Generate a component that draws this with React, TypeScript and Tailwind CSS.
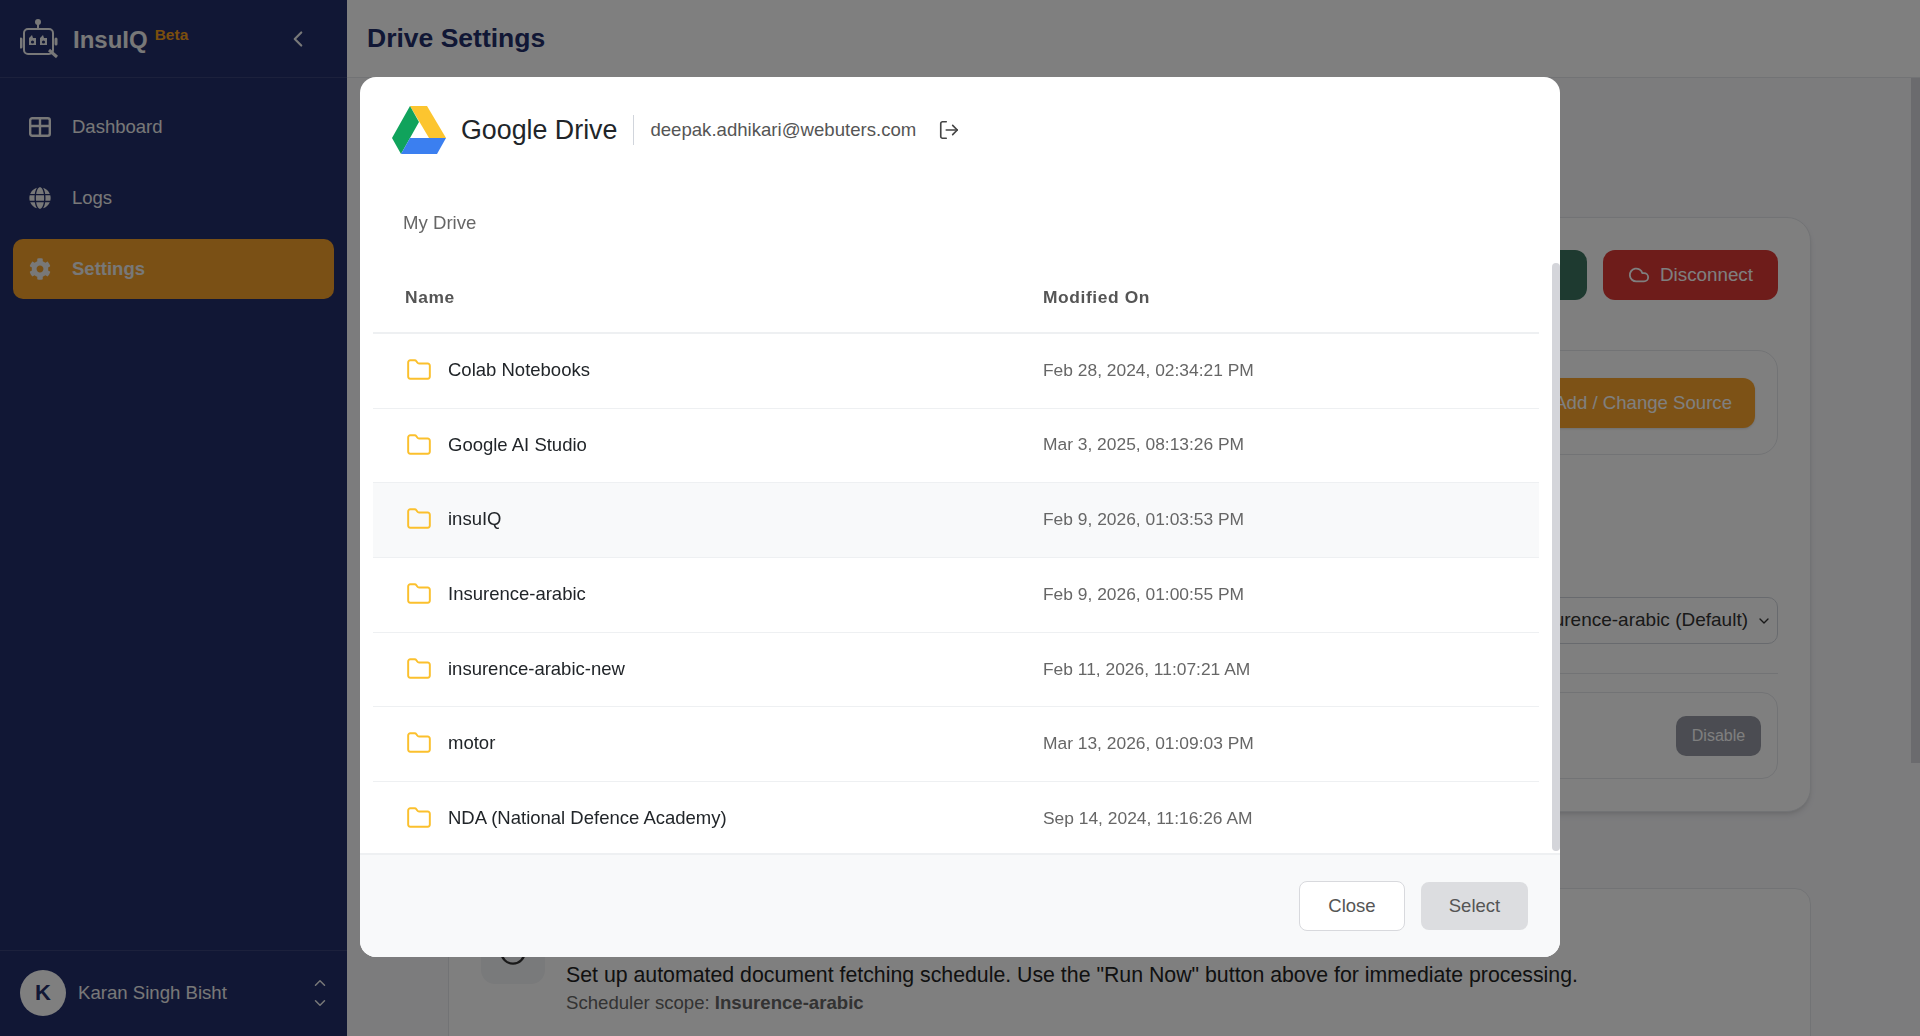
import { ChevronDown, ChevronLeft, ChevronUp, Cloud, Clock, Folder, LogOut } from "lucide-react";
import { FaCog, FaGlobe } from "react-icons/fa";

const files = [
  { name: "Colab Notebooks", modified: "Feb 28, 2024, 02:34:21 PM" },
  { name: "Google AI Studio", modified: "Mar 3, 2025, 08:13:26 PM" },
  { name: "insuIQ", modified: "Feb 9, 2026, 01:03:53 PM", hover: true },
  { name: "Insurence-arabic", modified: "Feb 9, 2026, 01:00:55 PM" },
  { name: "insurence-arabic-new", modified: "Feb 11, 2026, 11:07:21 AM" },
  { name: "motor", modified: "Mar 13, 2026, 01:09:03 PM" },
  { name: "NDA (National Defence Academy)", modified: "Sep 14, 2024, 11:16:26 AM" },
];

const RobotLogo = () => (
  <svg width="40" height="42" viewBox="0 0 40 42" fill="none" stroke="currentColor" strokeWidth="2">
    <circle cx="18" cy="4" r="3" fill="currentColor" stroke="none" />
    <path d="M18 6v5" />
    <rect x="4" y="11" width="29" height="25" rx="4" />
    <path d="M1 21v8M36 21v5" strokeWidth="3" strokeLinecap="round" />
    <path d="M9 20l3-3 1 3h3v7H9z" fill="currentColor" stroke="none" />
    <path d="M20 20l3-3 1 3h3v7h-7z" fill="currentColor" stroke="none" />
    <circle cx="12.5" cy="24" r="1.6" fill="#222e6a" stroke="none" />
    <circle cx="23.5" cy="24" r="1.6" fill="#222e6a" stroke="none" />
    <path d="M29 32l8 7" strokeWidth="3" />
  </svg>
);

const DashboardIcon = () => (
  <svg width="22" height="20" viewBox="0 0 22 20" fill="none" stroke="currentColor" strokeWidth="2.4">
    <rect x="1.2" y="1.2" width="19.6" height="17.6" rx="2" />
    <path d="M1 9h20M11 1v18" />
  </svg>
);

const DriveLogo = () => (
  <svg width="54" height="48" viewBox="0 0 54 48">
    <path d="M18 0h17L54 32H37z" fill="#fcc52f" />
    <path d="M18 0L0 32l9 16 18-32z" fill="#10a35c" />
    <path d="M18 32h36l-9 16H9z" fill="#3b7ff0" />
  </svg>
);

const Sidebar = () => (
  <aside className="w-[347px] h-full shrink-0 bg-[#222e6a] flex flex-col text-[#f0f0f0]">
    <div className="h-[78px] shrink-0 border-b border-white/10 flex items-center pl-[20px] pr-[36px]">
      <RobotLogo />
      <span className="ml-[13px] mt-[3px] text-[24px] font-bold">InsuIQ</span>
      <span className="ml-[7px] mb-[8px] text-[15.5px] font-bold text-[#f59e1b]">Beta</span>
      <ChevronLeft className="ml-auto" size={26} strokeWidth={2} />
    </div>
    <nav className="flex-1 px-[13px] pt-[19px] flex flex-col gap-[11px] text-[18.5px]">
      <a className="h-[60px] flex items-center gap-[21px] pl-[16px]">
        <DashboardIcon />
        <span>Dashboard</span>
      </a>
      <a className="h-[60px] flex items-center gap-[21px] pl-[16px]">
        <FaGlobe size={22} />
        <span>Logs</span>
      </a>
      <a className="h-[60px] flex items-center gap-[21px] pl-[16px] rounded-[10px] bg-[#f4a02a] font-bold">
        <FaCog size={22} />
        <span>Settings</span>
      </a>
    </nav>
    <div className="h-[86px] pb-[2px] shrink-0 border-t border-white/10 flex items-center pl-[20px] pr-[18px]">
      <div className="w-[46px] h-[46px] rounded-full bg-white text-[#222e6a] font-bold text-[22px] flex items-center justify-center">
        K
      </div>
      <span className="ml-[12px] text-[18.6px]">Karan Singh Bisht</span>
      <div className="ml-auto flex flex-col items-center gap-[2px]">
        <ChevronUp size={18} />
        <ChevronDown size={18} />
      </div>
    </div>
  </aside>
);

const Background = () => (
  <main className="flex-1 h-full flex flex-col overflow-hidden bg-[#f8f8fb]">
    <header className="h-[78px] shrink-0 bg-white border-b border-gray-200 flex items-center pl-[20px]">
      <h1 className="text-[26.5px] font-bold text-[#222e6a]">Drive Settings</h1>
    </header>
    <div className="flex-1 pl-[101px] pr-[109px] pt-[139px] flex flex-col">
      <section className="h-[595px] shrink-0 bg-white rounded-[24px] border border-gray-200 shadow-md pt-[32px] px-[32px] flex flex-col items-end">
        <div className="flex gap-[16px]">
          <button className="w-[160px] h-[50px] rounded-[12px] bg-[#3c7460]"></button>
          <button className="w-[175px] h-[50px] rounded-[12px] bg-[#dc3835] text-white text-[18.8px] flex items-center justify-center gap-[10px]">
            <Cloud size={22} />
            Disconnect
          </button>
        </div>
        <div className="w-full h-[105px] mt-[50px] rounded-[20px] border border-gray-200 flex items-center justify-end pr-[22px]">
          <button className="w-[300px] h-[50px] rounded-[12px] bg-[#fba42c] text-white text-[18.6px] pr-[23px] text-right shadow">
            Add / Change Source
          </button>
        </div>
        <div className="w-[400px] h-[47px] mt-[142px] rounded-[10px] border border-gray-300 flex items-center justify-end pr-[5px] gap-[8px] text-[19px] text-[#333]">
          Insurence-arabic (Default)
          <ChevronDown size={16} />
        </div>
        <div className="w-full h-px mt-[29px] bg-gray-200"></div>
        <div className="w-full h-[87px] mt-[18px] rounded-[16px] border border-gray-200 flex items-center justify-end pr-[16px]">
          <button className="w-[85px] h-[40px] rounded-[10px] bg-[#9699a4] text-white text-[16px]">Disable</button>
        </div>
      </section>
      <section className="h-[300px] shrink-0 mt-[76px] bg-white rounded-t-[16px] border border-gray-200 pl-[32px] pt-[31px] flex gap-[21px]">
        <div className="w-[64px] h-[64px] rounded-[14px] bg-gray-100 flex items-center justify-center text-[#333]">
          <Clock size={28} />
        </div>
        <div className="pt-[41px]">
          <p className="text-[21.3px] leading-[28px] whitespace-nowrap text-[#222]">
            Set up automated document fetching schedule. Use the "Run Now" button above for immediate processing.
          </p>
          <p className="text-[18.6px] leading-[28px] text-[#666]">
            Scheduler scope: <b>Insurence-arabic</b>
          </p>
        </div>
      </section>
    </div>
  </main>
);

const FileRow = ({ name, modified, hover }: { name: string; modified: string; hover?: boolean }) => (
  <div className={`h-[74.7px] pb-[2px] shrink-0 flex items-center border-b border-[#eef0f2] ${hover ? "bg-[#f8f9fa]" : ""}`}>
    <div className="w-[670px] pl-[33px] flex items-center gap-[16px] text-[18.5px] text-[#212529]">
      <Folder size={26} strokeWidth={1.8} className="text-[#fbc02d]" />
      {name}
    </div>
    <div className="text-[17.4px] text-[#666]">{modified}</div>
  </div>
);

const DriveModal = () => (
  <div className="fixed inset-0 z-10 bg-black/50 flex justify-center pt-[77px]">
    <div className="relative w-[1200px] h-[880px] bg-white rounded-[16px] overflow-hidden flex flex-col">
      <div className="h-[106px] shrink-0 flex items-center pl-[32px]">
        <DriveLogo />
        <span className="ml-[15px] text-[26.8px] text-[#212529]">Google Drive</span>
        <div className="w-px h-[30px] ml-[16px] bg-gray-300"></div>
        <span className="ml-[16px] text-[18.6px] text-[#555]">deepak.adhikari@webuters.com</span>
        <LogOut size={22} strokeWidth={1.8} className="ml-[22px] text-[#444]" />
      </div>
      <div className="pl-[43px] pt-[26px] text-[18.6px] leading-[28px] text-[#666]">My Drive</div>
      <div className="flex-1 mx-[13px] mt-[26px] mr-[21px] flex flex-col overflow-hidden">
        <div className="h-[71px] shrink-0 flex items-center border-b-2 border-[#eef0f2] text-[17.4px] font-bold tracking-[0.6px] text-[#555]">
          <div className="w-[670px] pl-[32px]">Name</div>
          <div>Modified On</div>
        </div>
        {files.map((file) => (
          <FileRow key={file.name} {...file} />
        ))}
      </div>
      <div className="h-[104px] shrink-0 bg-[#f8f9fa] border-t-2 border-[#eef0f2] flex items-center justify-end gap-[16px] pr-[32px]">
        <button className="w-[106px] h-[50px] rounded-[8px] bg-white border border-[#d8d9dd] text-[18.5px] text-[#555]">
          Close
        </button>
        <button className="w-[107px] h-[48px] rounded-[8px] bg-[#dcdde0] text-[18.5px] text-[#555]">Select</button>
      </div>
      <div className="absolute right-0 top-[186px] w-[8px] h-[588px] rounded-full bg-[#d4d5da]"></div>
    </div>
  </div>
);

export default function App() {
  return (
    <div className="relative w-[1920px] h-[1036px] overflow-hidden flex font-['Liberation_Sans',Arial,sans-serif]">
      <Sidebar />
      <Background />
      <DriveModal />
      <div className="absolute right-0 top-[78px] w-[9px] h-[685px] z-20 bg-[#6b6b6e]"></div>
    </div>
  );
}
